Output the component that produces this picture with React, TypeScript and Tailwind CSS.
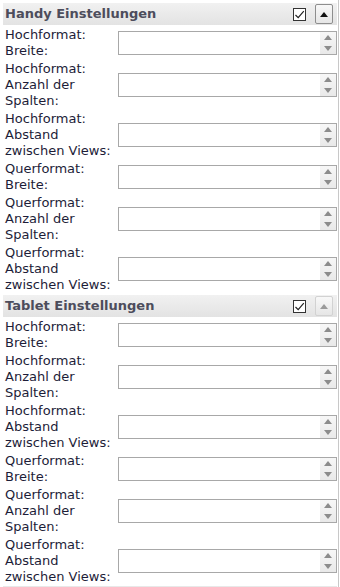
import React from "react";

const fields = [
  ["Hochformat:", "Breite:"],
  ["Hochformat:", "Anzahl der", "Spalten:"],
  ["Hochformat:", "Abstand", "zwischen Views:"],
  ["Querformat:", "Breite:"],
  ["Querformat:", "Anzahl der", "Spalten:"],
  ["Querformat:", "Abstand", "zwischen Views:"],
];

const Spinner = () => (
  <div className="flex items-stretch h-[24px] border border-[#a8a8a8] bg-white">
    <input className="flex-1 min-w-0 outline-none bg-transparent px-1 text-[13px]" />
    <div className="w-[16px] flex flex-col bg-gradient-to-b from-[#f7f7f7] to-[#e9e9e9]">
      <div className="flex-1 flex items-center justify-center">
        <svg width="8" height="5" viewBox="0 0 8 5">
          <path d="M0 5 L4 0 L8 5 Z" fill="#8c8c8c" />
        </svg>
      </div>
      <div className="flex-1 flex items-center justify-center">
        <svg width="8" height="5" viewBox="0 0 8 5">
          <path d="M0 0 L4 5 L8 0 Z" fill="#8c8c8c" />
        </svg>
      </div>
    </div>
  </div>
);

const Section = ({ title, active }: { title: string; active: boolean }) => (
  <div>
    <div className="h-[22px] flex items-center pl-[2px] pr-[4px] bg-gradient-to-b from-[#f1f1f1] to-[#e3e3e3]">
      <span className="flex-1 font-bold text-[13px] text-[#4d4d5c]">{title}</span>
      <div className="w-[13px] h-[13px] border border-[#333] bg-white flex items-center justify-center mr-[9px]">
        <svg width="11" height="11" viewBox="0 0 11 11">
          <path d="M1.5 6 L4.2 8.6 L9.8 2.2" stroke="#222" strokeWidth="1.2" fill="none" />
        </svg>
      </div>
      <div
        className={`w-[18px] h-[20px] rounded-[2px] border flex items-center justify-center bg-gradient-to-b from-[#f8f8f8] to-[#e6e6e6] ${
          active ? "border-[#8e8e8e]" : "border-[#d2d2d2]"
        }`}
      >
        <svg width="8" height="5" viewBox="0 0 8 5">
          <path d="M0 5 L4 0 L8 5 Z" fill={active ? "#111" : "#9a9a9a"} />
        </svg>
      </div>
    </div>
    {fields.map((lines, i) => (
      <div key={i} className="mt-[2px] grid grid-cols-[115px_1fr] items-center">
        <div className="text-[13px] leading-[16px] text-[#1d1d38] pl-[2px]">
          {lines.map((l) => (
            <div key={l}>{l}</div>
          ))}
        </div>
        <Spinner />
      </div>
    ))}
  </div>
);

export default function App() {
  return (
    <div
      className="w-[340px] h-[587px] bg-white overflow-hidden"
      style={{ fontFamily: '"DejaVu Sans", Verdana, sans-serif' }}
    >
      <div className="w-[339px] h-full border-r border-[#c8c8c8] pl-[3px] pr-[1px] pt-[3px]">
        <Section title="Handy Einstellungen" active />
        <div className="mt-[2px]">
          <Section title="Tablet Einstellungen" active={false} />
        </div>
        <div className="mt-[1px] h-px bg-[#e8e8e8]" />
      </div>
    </div>
  );
}
